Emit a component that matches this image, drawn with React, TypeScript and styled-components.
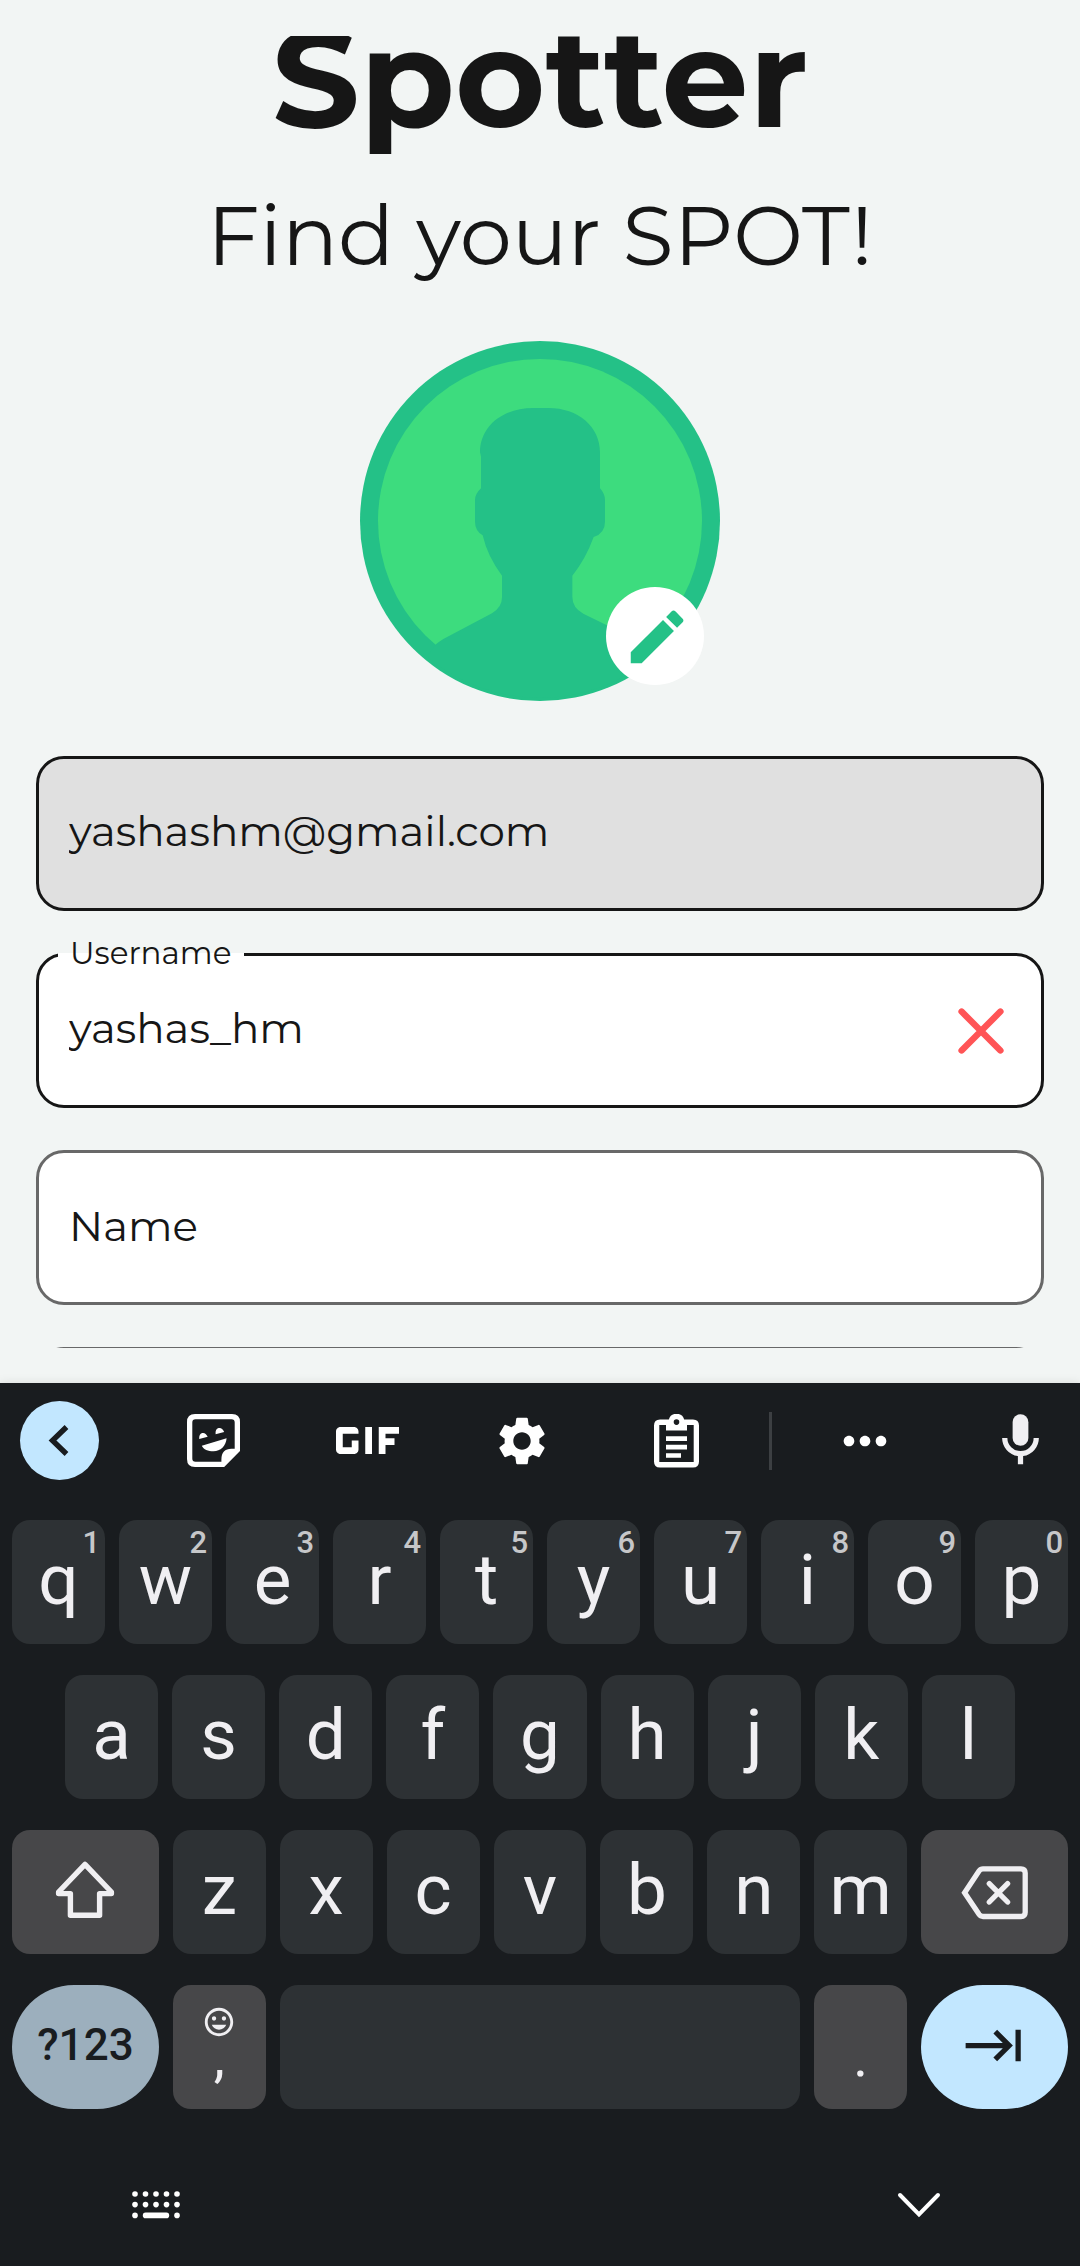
import React from "react";
import styled, { createGlobalStyle } from "styled-components";
import {
  MdEdit,
  MdGif,
  MdInsertEmoticon,
  MdKeyboardTab,
  MdMoreHoriz,
  MdSettings,
} from "react-icons/md";

const ink = "#161616";
const paper = "#f2f5f4";
const green = "#24c187";
const night = "#191c1f";
const glyph = "#f0eff2";
const sky = "#c2e7ff";

const GlobalStyle = createGlobalStyle`
  * { box-sizing: border-box; }
  body { margin: 0; background: ${paper}; }
  button, input { font: inherit; margin: 0; }
`;

const Screen = styled.div`
  display: flex;
  flex-direction: column;
  height: 100vh;
  background: ${paper};
  color: ${ink};
  font-family: Montserrat, Inter, "Open Sans", sans-serif;
`;

/* ---------- profile form ---------- */

const ScrollArea = styled.main`
  flex: 1;
  min-height: 0;
  margin: 36px 0 35px;
  padding: 0 36px;
  overflow: hidden;
`;

const Content = styled.div`
  display: flex;
  flex-direction: column;
  align-items: center;
  margin-top: -34px;
`;

const Title = styled.h1`
  margin: 0;
  font-size: 138px;
  line-height: 152px;
  font-weight: 700;
`;

const Tagline = styled.p`
  margin: 30px 0 0;
  font-size: 83px;
  line-height: 104px;
  font-weight: 400;
  white-space: nowrap;
`;

const AvatarBox = styled.div`
  position: relative;
  width: 360px;
  height: 360px;
  margin-top: 53px;
`;

const EditButton = styled.button`
  position: absolute;
  right: 16px;
  bottom: 16px;
  display: grid;
  place-items: center;
  width: 98px;
  height: 98px;
  padding: 2px 0 0 3px;
  border: 0;
  border-radius: 50%;
  background: #fff;
  color: ${green};
`;

const Form = styled.form`
  display: flex;
  flex-direction: column;
  gap: 42px;
  width: 100%;
  margin-top: 55px;
`;

const Field = styled.div<{ $tone?: "strong" | "soft"; $locked?: boolean }>`
  position: relative;
  display: flex;
  align-items: center;
  height: 155px;
  padding: 0 36px 0 30px;
  border: 3px solid ${(p) => (p.$tone === "strong" ? ink : "#686868")};
  border-radius: 28px;
  background: ${(p) => (p.$locked ? "#e0e0e0" : "#fff")};
`;

const Input = styled.input`
  flex: 1;
  min-width: 0;
  height: 100%;
  padding: 0 0 6px;
  border: 0;
  outline: 0;
  background: transparent;
  color: ${ink};
  font-size: 42px;
  font-weight: 400;
`;

const InnerLabel = styled.label`
  position: absolute;
  left: 30px;
  padding-bottom: 4px;
  font-size: 42px;
  line-height: 52px;
  font-weight: 400;
`;

const NotchLabel = styled.label`
  position: absolute;
  top: -23px;
  left: 19px;
  padding: 0 13px 0 12px;
  font-size: 31px;
  line-height: 40px;
  font-weight: 400;
  background: linear-gradient(transparent 20px, #fff 20px);
`;

const ClearButton = styled.button`
  display: grid;
  place-items: center;
  width: 48px;
  height: 48px;
  padding: 0;
  border: 0;
  background: transparent;
`;

/* ---------- on-screen keyboard ---------- */

const Keyboard = styled.section`
  flex: none;
  background: ${night};
  color: ${glyph};
  font-family: Roboto, Inter, sans-serif;
  box-shadow: 0 0 10px rgba(0, 0, 0, 0.1);
`;

const Toolbar = styled.div`
  display: grid;
  grid-template-columns: 695fr 110fr 234fr;
  align-items: center;
  padding: 18px 20px 0;
  color: #fff;
`;

const ToolGroup = styled.div`
  display: flex;
  justify-content: space-between;
`;

const Tool = styled.button<{ $accent?: boolean }>`
  display: grid;
  place-items: center;
  width: 79px;
  height: 79px;
  padding: 0;
  border: 0;
  border-radius: 50%;
  background: ${(p) => (p.$accent ? sky : "transparent")};
  color: inherit;
`;

const Divider = styled.span`
  justify-self: center;
  width: 3px;
  height: 58px;
  background: #3c3f42;
`;

const Rows = styled.div`
  display: flex;
  flex-direction: column;
  gap: 31px;
  padding: 40px 12px 0;
`;

const Row = styled.div<{ $inset?: boolean }>`
  display: flex;
  gap: 14px;
  padding: 0 ${(p) => (p.$inset ? "53px" : "0")};
`;

type Kind = "letter" | "action" | "mode" | "enter";

const kindFill: Record<Kind, string> = {
  letter: "#2d3134",
  action: "#474749",
  mode: "#9cafbd",
  enter: sky,
};

const Key = styled.button<{ $span?: number; $kind?: Kind }>`
  position: relative;
  display: flex;
  flex-direction: column;
  align-items: center;
  justify-content: center;
  flex: ${(p) => p.$span ?? 93} 1 0;
  min-width: 0;
  height: 124px;
  padding: 0 0 4px;
  border: 0;
  border-radius: ${(p) => (p.$kind === "mode" || p.$kind === "enter" ? 62 : 18)}px;
  background: ${(p) => kindFill[p.$kind ?? "letter"]};
  color: ${(p) => (p.$kind === "mode" || p.$kind === "enter" ? night : glyph)};
  font-size: ${(p) => (p.$kind === "mode" ? 44 : 71)}px;
  font-weight: ${(p) => (p.$kind === "mode" ? 500 : 400)};
  line-height: 84px;
`;

const Hint = styled.span`
  position: absolute;
  top: 7px;
  right: 5px;
  color: #c6c7c9;
  font-size: 31px;
  line-height: 32px;
  font-weight: 500;
`;

const Punctuation = styled.span`
  font-size: 56px;
  line-height: 36px;
`;

const PunctuationKey = styled(Key)`
  justify-content: flex-end;
  padding-bottom: 34px;
`;

const NavBar = styled.nav`
  display: flex;
  align-items: center;
  justify-content: space-between;
  height: 157px;
  padding: 34px 133px 0 128px;
`;

const NavButton = styled.button`
  display: grid;
  place-items: center;
  width: 56px;
  height: 56px;
  padding: 0;
  border: 0;
  background: transparent;
`;

/* ---------- drawings ---------- */

const Portrait = () => (
  <svg width="360" height="360" viewBox="60 63 1080 1080" role="img" aria-label="Profile">
    <circle cx="600" cy="603" r="540" fill={green} />
    <circle cx="600" cy="603" r="486" fill="#3ddc7e" />
    <path
      fill={green}
      d="M420 397C420 320 485 264 580 264H625C715 264 780 320 780 397V505Q795 522 795 540V605Q795 640 761 651Q737 717 697 767V830Q697 863 730 881L885 957Q900 964 912 973L940 1010A530 530 0 0 1 260 1010L288 973Q297 965 310 957L456 880Q486 862 486 832V767Q442 708 428 646Q405 632 405 605V540Q405 522 423 505V410Z"
    />
  </svg>
);

const Cross = () => (
  <svg width="48" height="48" viewBox="0 0 48 48" fill="none" stroke="#ff5456" strokeWidth="6.4" strokeLinecap="round">
    <path d="M4.6 4.6 43.4 43.4M43.4 4.6 4.6 43.4" />
  </svg>
);

const Back = () => (
  <svg width="79" height="79" viewBox="0 0 79 79" fill="none" stroke={night} strokeWidth="5.4">
    <path d="M46.5 26 32.5 39.5 46.5 53" />
  </svg>
);

const Sticker = () => (
  <svg width="53" height="53" viewBox="0 0 53 53">
    <path
      fill="#fff"
      fillRule="evenodd"
      d="M8 0H45Q53 0 53 8V37L37.2 53H8Q0 53 0 45V8Q0 0 8 0ZM8.5 5.3Q5.3 5.3 5.3 8.5V44.5Q5.3 47.7 8.5 47.7H34.4V45.5Q34.4 34.7 44.5 34.7H47.7V8.5Q47.7 5.3 44.5 5.3Z"
    />
    <path
      fill="#fff"
      d="M12.2 25A4.6 7 -15 0 1 20.7 22.7ZM28.6 20.3A4.6 7 -15 0 1 37.2 18ZM14.8 31.7 39.6 24.3C39 32 33.5 37.3 26.5 37.3 21 37.3 16.5 35.5 14.8 31.7Z"
    />
  </svg>
);

const Clipboard = () => (
  <svg width="45" height="54" viewBox="0 0 45 54">
    <path
      fill="#fff"
      fillRule="evenodd"
      d="M6 5.6H14.8A8 8 0 0 1 30.2 5.6H39Q45 5.6 45 11.6V47.4Q45 53.4 39 53.4H6Q0 53.4 0 47.4V11.6Q0 5.6 6 5.6ZM5.3 10.9V48.1H39.7V10.9H33V16.4H12V10.9ZM22.5 5.3A2.8 2.8 0 1 0 22.5 10.9 2.8 2.8 0 1 0 22.5 5.3Z"
    />
    <path fill="#fff" d="M12 22.2H33V27H12ZM12 30.8H33V35.4H12ZM12 39.2H27V43.8H12Z" />
  </svg>
);

const Mic = () => (
  <svg width="63" height="63" viewBox="0 0 24 24" fill={glyph}>
    <path d="M12 14a3 3 0 0 0 3-3V5a3 3 0 0 0-6 0v6a3 3 0 0 0 3 3z" />
    <path d="M17 11a5 5 0 0 1-10 0H5a7 7 0 0 0 6 6.92V21h2v-3.08A7 7 0 0 0 19 11z" />
  </svg>
);

const Shift = () => (
  <svg width="60" height="58" viewBox="0 0 60 58" fill="none" stroke={glyph} strokeWidth="5.4" strokeLinejoin="round">
    <path d="M30 3.4 56.4 31V32.6H44.6V54.2H15.4V32.6H3.6V31Z" />
  </svg>
);

const Backspace = () => (
  <svg width="67" height="60" viewBox="0 -6 67 60" fill="none" stroke={glyph} strokeWidth="5.3">
    <path d="M3.6 26.7 18 5Q19.6 2.8 22 2.8H60Q64.2 2.8 64.2 7V46.3Q64.2 50.5 60 50.5H22Q19.6 50.5 18 48.3Z" />
    <path strokeLinecap="round" d="M28.3 17.6 46.6 36M46.6 17.6 28.3 36" />
  </svg>
);

const KeyboardDots = () => (
  <svg width="48" height="28" viewBox="0 0 48 28" fill="#fff">
    {[3, 13.5, 24, 34.5, 45].map((x) => (
      <React.Fragment key={x}>
        <circle cx={x} cy="3" r="2.8" />
        <circle cx={x} cy="13.6" r="2.8" />
      </React.Fragment>
    ))}
    <circle cx="3" cy="24.4" r="2.8" />
    <rect x="10.8" y="21.6" width="26.4" height="5.6" rx="2.8" />
    <circle cx="45" cy="24.4" r="2.8" />
  </svg>
);

const Down = () => (
  <svg width="44" height="26" viewBox="0 0 44 26" fill="none" stroke="#fff" strokeWidth="4" strokeLinecap="round">
    <path d="M3 3 22 22.4 41 3" />
  </svg>
);

const topRow = "qwertyuiop".split("");
const homeRow = "asdfghjkl".split("");
const bottomRow = "zxcvbnm".split("");

export default function App() {
  return (
    <Screen>
      <GlobalStyle />
      <ScrollArea>
        <Content>
          <Title>Spotter</Title>
          <Tagline>Find your SPOT!</Tagline>
          <AvatarBox>
            <Portrait />
            <EditButton type="button" aria-label="Edit photo">
              <MdEdit size={70} />
            </EditButton>
          </AvatarBox>
          <Form>
            <Field $tone="strong" $locked>
              <Input aria-label="Email" type="email" defaultValue="yashashm@gmail.com" readOnly />
            </Field>
            <Field $tone="strong">
              <NotchLabel htmlFor="username">Username</NotchLabel>
              <Input id="username" defaultValue="yashas_hm" spellCheck={false} />
              <ClearButton type="button" aria-label="Clear username">
                <Cross />
              </ClearButton>
            </Field>
            <Field>
              <InnerLabel htmlFor="name">Name</InnerLabel>
              <Input id="name" />
            </Field>
            <Field>
              <Input aria-label="Bio" />
            </Field>
          </Form>
        </Content>
      </ScrollArea>

      <Keyboard aria-label="Keyboard">
        <Toolbar>
          <ToolGroup>
            <Tool $accent aria-label="Back">
              <Back />
            </Tool>
            <Tool aria-label="Stickers">
              <Sticker />
            </Tool>
            <Tool aria-label="GIF">
              <MdGif size={63} viewBox="5 5 14 14" />
            </Tool>
            <Tool aria-label="Settings">
              <MdSettings size={58} />
            </Tool>
            <Tool aria-label="Clipboard">
              <Clipboard />
            </Tool>
          </ToolGroup>
          <Divider />
          <ToolGroup>
            <Tool aria-label="More">
              <MdMoreHoriz size={64} />
            </Tool>
            <Tool aria-label="Voice input">
              <Mic />
            </Tool>
          </ToolGroup>
        </Toolbar>

        <Rows>
          <Row>
            {topRow.map((letter, i) => (
              <Key key={letter}>
                {letter}
                <Hint>{(i + 1) % 10}</Hint>
              </Key>
            ))}
          </Row>
          <Row $inset>
            {homeRow.map((letter) => (
              <Key key={letter}>{letter}</Key>
            ))}
          </Row>
          <Row>
            <Key $span={147} $kind="action" aria-label="Shift">
              <Shift />
            </Key>
            {bottomRow.map((letter) => (
              <Key key={letter}>{letter}</Key>
            ))}
            <Key $span={147} $kind="action" aria-label="Backspace">
              <Backspace />
            </Key>
          </Row>
          <Row>
            <Key $span={147} $kind="mode">
              ?123
            </Key>
            <PunctuationKey $kind="action">
              <MdInsertEmoticon size={34} />
              <Punctuation>,</Punctuation>
            </PunctuationKey>
            <Key $span={521} aria-label="Space" />
            <PunctuationKey $kind="action">
              <Punctuation>.</Punctuation>
            </PunctuationKey>
            <Key $span={147} $kind="enter" aria-label="Next">
              <MdKeyboardTab size={63} />
            </Key>
          </Row>
        </Rows>

        <NavBar>
          <NavButton aria-label="Switch keyboard">
            <KeyboardDots />
          </NavButton>
          <NavButton aria-label="Hide keyboard">
            <Down />
          </NavButton>
        </NavBar>
      </Keyboard>
    </Screen>
  );
}
